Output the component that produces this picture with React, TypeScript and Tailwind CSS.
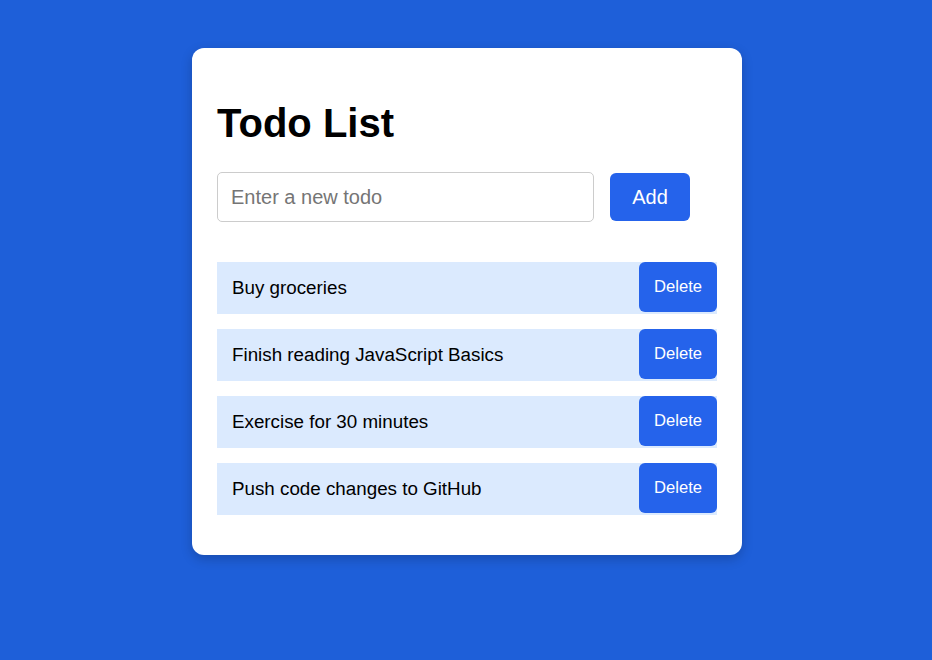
import { useState } from "react";

const initialTodos = [
  "Buy groceries",
  "Finish reading JavaScript Basics",
  "Exercise for 30 minutes",
  "Push code changes to GitHub",
];

const App = () => {
  const [todos, setTodos] = useState<string[]>(initialTodos);
  const [text, setText] = useState("");

  const addTodo = () => {
    if (!text.trim()) return;
    setTodos([...todos, text.trim()]);
    setText("");
  };

  const removeTodo = (index: number) => {
    setTodos(todos.filter((_, i) => i !== index));
  };

  return (
    <div className="min-h-screen bg-[#1e5fd9] pt-12 pl-[2px] font-['Liberation_Sans',Arial,sans-serif]">
      <div className="mx-auto w-[550px] rounded-xl bg-white px-[25px] pt-[52px] pb-[40px] shadow-[0_4px_12px_rgba(0,0,0,0.2)]">
        <h1 className="text-[40px] font-bold leading-[46px] text-black">Todo List</h1>

        <div className="mt-[26px] flex items-center gap-4">
          <input
            value={text}
            onChange={(e) => setText(e.target.value)}
            placeholder="Enter a new todo"
            className="h-[50px] w-[377px] rounded-[5px] border border-[#ccc] px-[13px] text-[20px] text-black outline-none placeholder:text-[#757575]"
          />
          <button
            onClick={addTodo}
            className="h-[48px] w-[80px] rounded-md bg-[#2563eb] text-[20px] text-white"
          >
            Add
          </button>
        </div>

        <ul className="mt-10 flex w-[500px] flex-col gap-[15px]">
          {todos.map((todo, i) => (
            <li key={i} className="flex h-[52px] items-start justify-between bg-[#dbeafe]">
              <span className="self-center pl-[15px] text-[18.8px] text-black">{todo}</span>
              <button
                onClick={() => removeTodo(i)}
                className="h-[50px] w-[78px] rounded-md bg-[#2563eb] text-[16.6px] text-white"
              >
                Delete
              </button>
            </li>
          ))}
        </ul>
      </div>
    </div>
  );
};

export default App;
